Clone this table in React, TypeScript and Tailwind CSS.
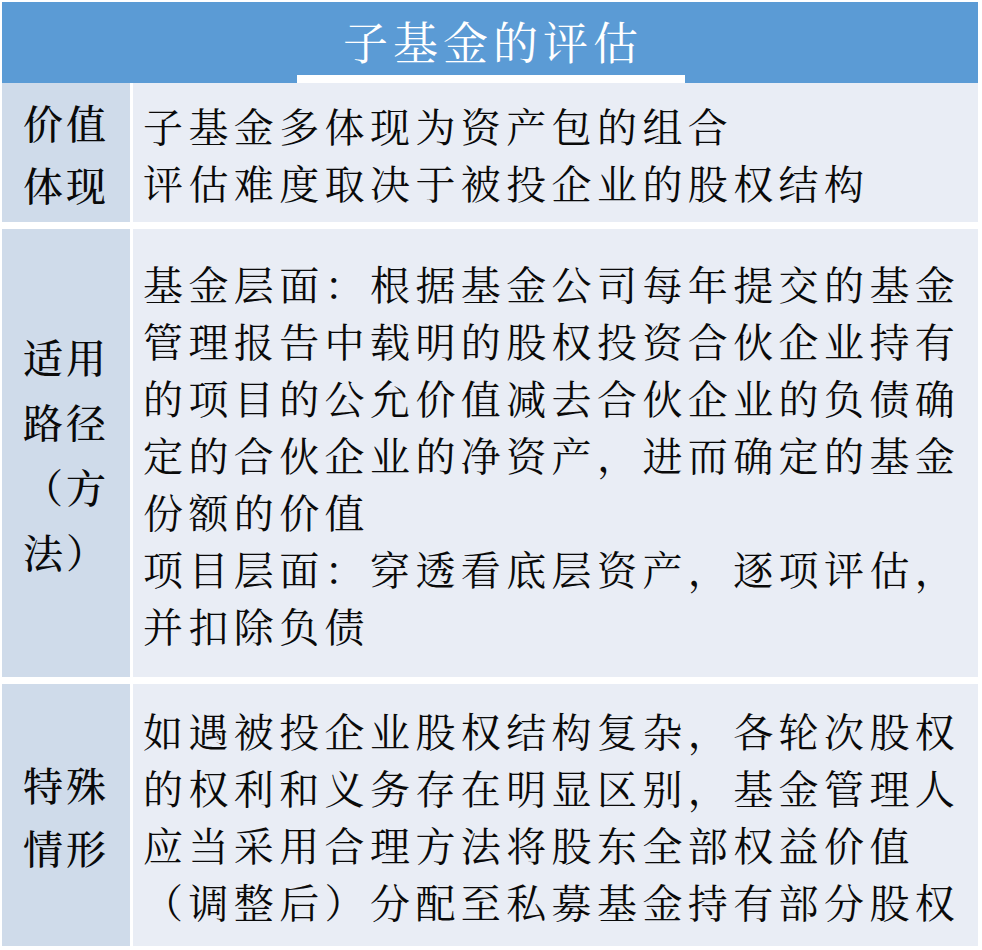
import React from "react";

const font = {
  fontFamily:
    '"Noto Serif CJK SC", "Noto Serif SC", "Liberation Serif", "Noto Sans CJK SC", serif',
};

function Row({
  label,
  lines,
  h,
  labelLH,
}: {
  label: string[];
  lines: string[];
  h: string;
  labelLH: string;
}) {
  return (
    <div className={`flex gap-[3px] ${h}`}>
      <div className="w-[128px] shrink-0 bg-[#cfdbea] flex flex-col items-center justify-center">
        {label.map((l, i) => (
          <div
            key={i}
            className={`text-[40px] font-medium tracking-[3px] text-[#0a0a0a] ${labelLH} whitespace-nowrap`}
          >
            {l}
          </div>
        ))}
      </div>
      <div className="flex-1 bg-[#e9edf5] flex flex-col justify-center pl-[10px]">
        {lines.map((l, i) => (
          <div
            key={i}
            className="text-[40px] tracking-[5.4px] leading-[57px] text-[#0a0a0a] whitespace-nowrap"
          >
            {l}
          </div>
        ))}
      </div>
    </div>
  );
}

export default function App() {
  return (
    <div className="w-[982px] h-[950px] bg-white p-[2px] pr-[4px]" style={font}>
      <div className="flex flex-col bg-[#5b9bd5] h-[81px]">
        <div className="h-[73px] flex items-center justify-center">
          <span className="text-white text-[45px] tracking-[5px] leading-none mt-[4px] pl-[6px]">
            子基金的评估
          </span>
        </div>
        <div className="flex h-[8px]">
          <div className="w-[295px]" />
          <div className="w-[388px] bg-white" />
          <div className="flex-1" />
        </div>
      </div>
      <div className="flex flex-col gap-[7px]">
        <Row
          h="h-[139px]"
          labelLH="leading-[62px]"
          label={["价值", "体现"]}
          lines={["子基金多体现为资产包的组合", "评估难度取决于被投企业的股权结构"]}
        />
        <Row
          h="h-[448px]"
          labelLH="leading-[65px]"
          label={["适用", "路径", "（方", "法）"]}
          lines={[
            "基金层面：根据基金公司每年提交的基金",
            "管理报告中载明的股权投资合伙企业持有",
            "的项目的公允价值减去合伙企业的负债确",
            "定的合伙企业的净资产，进而确定的基金",
            "份额的价值",
            "项目层面：穿透看底层资产，逐项评估，",
            "并扣除负债",
          ]}
        />
        <Row
          h="h-[262px]"
          labelLH="leading-[63px]"
          label={["特殊", "情形"]}
          lines={[
            "如遇被投企业股权结构复杂，各轮次股权",
            "的权利和义务存在明显区别，基金管理人",
            "应当采用合理方法将股东全部权益价值",
            "（调整后）分配至私募基金持有部分股权",
          ]}
        />
      </div>
    </div>
  );
}
